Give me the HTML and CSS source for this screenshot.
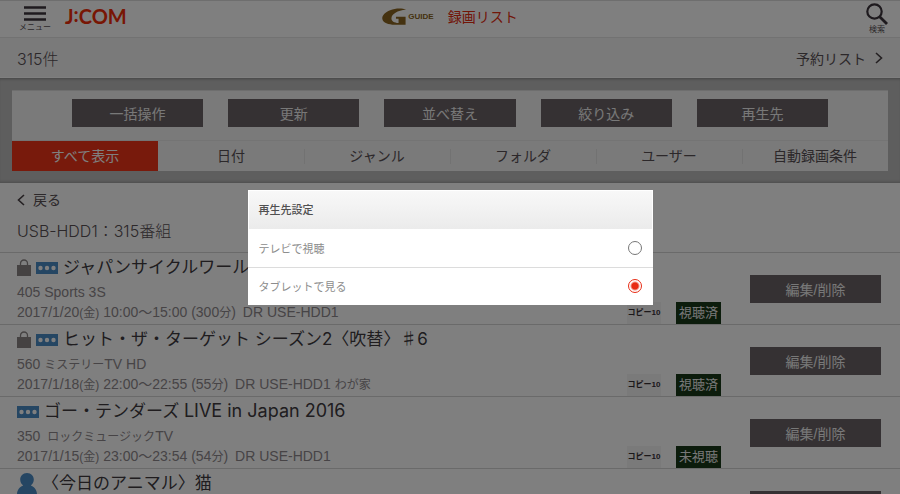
FILE: index.html
```html
<!DOCTYPE html>
<html lang="ja">
<head>
<meta charset="utf-8">
<meta name="viewport" content="width=device-width, initial-scale=1">
<title>録画リスト</title>
<link rel="stylesheet" href="styles.css">
</head>
<body>
<svg class="symbols" aria-hidden="true">
  <symbol id="lock" viewBox="0 0 14 17"><path d="M3.5 7V4.500a3.500 3.500 0 0 1 7 0V7" fill="none" stroke="#8a8484" stroke-width="1.300"/><rect y="6" width="14" height="11" fill="#8a8484"/></symbol>
  <symbol id="dots" viewBox="0 0 22 12"><rect width="22" height="12" fill="#4a8cc6"/><circle cx="4.500" cy="6" r="2.200" fill="#fff"/><circle cx="11" cy="6" r="2.200" fill="#fff"/><circle cx="17.500" cy="6" r="2.200" fill="#fff"/></symbol>
  <symbol id="person" viewBox="0 0 20 21"><path d="M10 0C5.800 0 3.200 3 3.200 6.600c0 2.500 1.200 4.700 3 5.900C3 13.800.2 16.500 0 21h20c-.2-4.500-3-7.200-6.200-8.500 1.800-1.200 3-3.400 3-5.900C16.800 3 14.200 0 10 0z" fill="#4a8cc6"/></symbol>
</svg>
<div class="app">
  <header class="topbar">
    <div class="topbar-left">
      <button class="icon-button" type="button">
        <svg width="22" height="20" viewBox="0 0 22 20" aria-hidden="true"><path d="M0 4.500h22M0 10.500h22M0 16.500h22" stroke="#3c343c" stroke-width="2.600"/></svg>
        <span>メニュー</span>
      </button>
      <a class="brand" href="#">J<span class="colon">:</span>COM</a>
    </div>
    <h1 class="heading">
      <span class="guide">
        <svg width="26" height="20" viewBox="0 0 27 20" aria-hidden="true"><path d="M25 2.500C21 .5 14 .7 8.500 3 3 5.200 0 8.500.3 11.800.8 16 7 18 13 18h11.500V9.700H14.500v2h2.700v4.500C12.500 16 9.800 14.300 9.800 11.500 9.800 7 16 3 25 2.500z" fill="#8a6420"/></svg>
        <span class="guide-text">GUIDE</span>
      </span>
      <span>録画リスト</span>
    </h1>
    <button class="icon-button search" type="button">
      <svg width="22" height="22" viewBox="0 0 22 22" aria-hidden="true"><circle cx="8.500" cy="8.500" r="7.200" fill="none" stroke="#3c343c" stroke-width="2.200"/><path d="M13.700 13.700l7.300 7.300" stroke="#3c343c" stroke-width="2.800"/></svg>
      <span>検索</span>
    </button>
  </header>
  <div class="countbar">
    <span class="count">315件</span>
    <a href="#">予約リスト<svg width="8" height="12" viewBox="0 0 8 12" aria-hidden="true"><path d="M1 1l5.500 5L1 11" fill="none" stroke="#484044" stroke-width="1.600"/></svg></a>
  </div>
  <section class="filters">
    <div class="panel">
      <div class="actions">
        <button class="btn" type="button">一括操作</button>
        <button class="btn" type="button">更新</button>
        <button class="btn" type="button">並べ替え</button>
        <button class="btn" type="button">絞り込み</button>
        <button class="btn" type="button">再生先</button>
      </div>
      <nav class="tabs">
        <a class="current" href="#">すべて表示</a>
        <a href="#">日付</a>
        <a href="#">ジャンル</a>
        <a href="#">フォルダ</a>
        <a href="#">ユーザー</a>
        <a href="#">自動録画条件</a>
      </nav>
    </div>
  </section>
  <main>
    <div class="location">
      <a href="#"><svg width="8" height="12" viewBox="0 0 8 12" aria-hidden="true"><path d="M7 1L1.500 6 7 11" fill="none" stroke="#484044" stroke-width="1.600"/></svg>戻る</a>
      <p>USB-HDD1：315番組</p>
    </div>
    <ul class="programs">
      <li>
        <div class="info">
          <h2><svg class="lock"><use href="#lock"/></svg><svg class="dots"><use href="#dots"/></svg><span>ジャパンサイクルワールド</span></h2>
          <p>405 Sports 3S</p>
          <p>2017/1/20<small>(金)</small> 10:00～15:00 (300<small>分</small>)&ensp;DR USE-HDD1</p>
        </div>
        <span class="copy">コピー10</span><span class="status">視聴済</span>
        <button class="btn edit" type="button">編集/削除</button>
      </li>
      <li>
        <div class="info">
          <h2><svg class="lock"><use href="#lock"/></svg><svg class="dots"><use href="#dots"/></svg><span>ヒット・ザ・ターゲット シーズン2〈吹替〉<span class="sharp">♯</span>6</span></h2>
          <p>560 <small>ミステリー</small>TV HD</p>
          <p>2017/1/18<small>(金)</small> 22:00～22:55 (55<small>分</small>)&ensp;DR USE-HDD1 <small>わが家</small></p>
        </div>
        <span class="copy">コピー10</span><span class="status">視聴済</span>
        <button class="btn edit" type="button">編集/削除</button>
      </li>
      <li>
        <div class="info">
          <h2><svg class="dots"><use href="#dots"/></svg><span>ゴー・テンダーズ <span class="latin">LIVE in Japan 2016</span></span></h2>
          <p>350&ensp;<small>ロックミュージック</small>TV</p>
          <p>2017/1/15<small>(金)</small> 23:00～23:54 (54<small>分</small>)&ensp;DR USE-HDD1</p>
        </div>
        <span class="copy">コピー10</span><span class="status">未視聴</span>
        <button class="btn edit" type="button">編集/削除</button>
      </li>
      <li>
        <div class="info">
          <h2><svg class="person"><use href="#person"/></svg><span>〈今日のアニマル〉猫</span></h2>
        </div>
        <button class="btn edit" type="button" aria-label="編集/削除"></button>
      </li>
    </ul>
  </main>
</div>
<div class="overlay">
  <form class="dialog" role="dialog" aria-labelledby="dialog-title">
    <h2 id="dialog-title">再生先設定</h2>
    <label><span>テレビで視聴</span><input type="radio" name="target" value="tv"></label>
    <label><span>タブレットで見る</span><input type="radio" name="target" value="tablet" checked></label>
  </form>
</div>
</body>
</html>
```

FILE: styles.css
```css
* { box-sizing: border-box; }

body {
  margin: 0;
  background: #fff;
  color: #585054;
  font-family: "Liberation Sans", "Noto Sans CJK JP", sans-serif;
  font-size: 14px;
  font-weight: 400;
}

h1, h2, p, ul { margin: 0; padding: 0; font-weight: 400; }
ul { list-style: none; }
a { color: inherit; text-decoration: none; }
button { font: inherit; color: inherit; border: 0; padding: 0; }
small { font-size: 12px; line-height: 1; }
svg { flex: none; }
.symbols { display: none; }

.app { height: 100vh; overflow: hidden; }

.topbar {
  display: grid;
  grid-template-columns: 1fr auto 1fr;
  height: 38px;
  padding: 0 12px;
  border-top: 1px solid #dcdcdc;
  border-bottom: 1px solid #e4e4e4;
}
.topbar-left { display: flex; gap: 15px; padding-left: 8px; }
.icon-button {
  display: flex;
  flex-direction: column;
  align-items: center;
  background: none;
  padding-top: 2px;
  font-size: 8px;
  line-height: 8px;
  white-space: nowrap;
  width: 30px;
  gap: 1px;
}
.search { justify-self: end; width: 22px; }
.brand {
  color: #f02c08;
  font-family: Lato, sans-serif;
  font-size: 20px;
  font-weight: 700;
  line-height: 30px;
}
.colon { vertical-align: 2px; line-height: 1; }
.heading {
  display: flex;
  gap: 14px;
  color: #e42c10;
  font-size: 14px;
  line-height: 32px;
}
.guide { display: flex; align-items: center; height: 32px; color: #8a6420; }
.guide-text { font-size: 8px; font-weight: 700; }

.countbar {
  display: flex;
  justify-content: space-between;
  align-items: center;
  height: 40px;
  padding: 0 17px;
  background: #f4f4f4;
  border-bottom: 1px solid #fff;
}
.countbar a { display: flex; align-items: center; gap: 9px; }

.filters {
  padding: 12px;
  background: #bcbcbc;
  box-shadow: inset 0 3px 3px -2px #888, inset 0 -3px 3px -2px #999;
}
.panel { background: #f4f4f4; border-top: 1px solid #dcdcdc; }
.actions { display: flex; gap: 25px; padding: 8px 60px 13px; }
.actions .btn { flex: 1; }
.btn {
  height: 28px;
  background: #6a6266;
  color: #f0f0f0;
  font-size: 14px;
}
.tabs {
  display: grid;
  grid-template-columns: repeat(6, 1fr);
  border-top: 1px solid #e8e8e8;
  line-height: 30px;
  text-align: center;
}
.tabs a + a + a { background: linear-gradient(#e4e4e4, #e4e4e4) 0 50% / 1px 15px no-repeat; }
.tabs .current { background: #f03418; color: #fff; }

.location { padding: 6px 17px 1px; }
.location a { display: flex; align-items: center; gap: 8px; line-height: 22px; }
.location p { line-height: 40px; }
.location p, .count {
  font-family: Inter, "Noto Sans CJK JP", sans-serif;
  font-size: 16px;
  font-weight: 300;
}

.programs li {
  display: flex;
  height: 72px;
  border-top: 1px solid #d4d4d4;
  padding: 0 19px 0 17px;
}
.info { flex: 1; min-width: 0; white-space: nowrap; color: #8e888c; }
.info h2 {
  display: flex;
  align-items: center;
  gap: 5px;
  height: 29px;
  font-family: Inter, "Noto Sans CJK JP", sans-serif;
  font-size: 17px;
  line-height: 29px;
  color: #403a3e;
}
.sharp { font-family: "Noto Sans CJK JP", sans-serif; line-height: 1; }
.latin { font-size: 18px; line-height: 1; }
.info p { height: 20px; line-height: 20px; }
.lock { width: 14px; height: 17px; }
.dots { width: 22px; height: 12px; }
.person { width: 20px; height: 21px; }
.copy, .status { align-self: flex-end; height: 22px; line-height: 22px; text-align: center; }
.copy {
  width: 34px;
  margin-right: 15px;
  background: #f4f4f4;
  color: #383034;
  font-size: 8px;
  font-weight: 700;
  white-space: nowrap;
}
.status { width: 45px; margin-right: 29px; background: #183818; color: #f0f0f0; font-size: 13px; }
.edit { width: 131px; margin-top: 22px; }

.overlay {
  position: fixed;
  inset: 0;
  display: flex;
  align-items: center;
  justify-content: center;
  background: rgba(0, 0, 0, .5);
}
.dialog { width: 45%; min-width: 300px; background: #fff; font-size: 11px; color: #8c8c8c; }
.dialog h2 {
  padding: 0 10px;
  border: 1px solid #fff;
  border-bottom: 0;
  background: linear-gradient(#f8f8f8, #ebebeb);
  color: #505050;
  font-size: 11px;
  font-weight: 500;
  line-height: 38px;
}
.dialog label {
  display: flex;
  align-items: center;
  justify-content: space-between;
  height: 38px;
  padding: 0 11px;
}
.dialog label + label { border-top: 1px solid #dcdcdc; }
.dialog input {
  appearance: none;
  width: 14px;
  height: 14px;
  margin: 0;
  border: 1px solid #777;
  border-radius: 50%;
}
.dialog input:checked {
  border-color: #e82c14;
  background: radial-gradient(circle, #e82c14 3px, #fff 5px);
}
```
